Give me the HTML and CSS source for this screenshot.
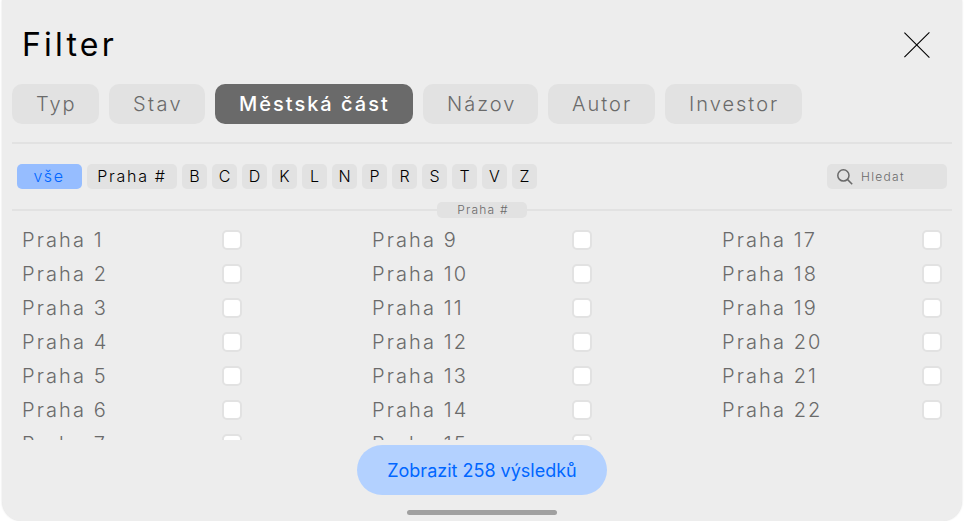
FILE: index.html
```html
<!DOCTYPE html>
<html lang="cs">
<head>
    <meta charset="UTF-8" />
    <title>Filter</title>
    <link rel="stylesheet" href="styles.css">
</head>
<body>

<div class="panel">
    <div class="header">
        <h1>Filter</h1>
        <svg class="close" width="26" height="26" viewBox="0 0 26 26">
            <path d="M0.4 0.6 L25.4 25.6 M25.4 0.4 L0.4 25.2" stroke="#000" stroke-width="1.1" fill="none"/>
        </svg>
    </div>

    <!-- Categories -->
    <div class="tabs">
        <div class="tab type">Typ</div>
        <div class="tab state">Stav</div>
        <div class="tab district active">Městská část</div>
        <div class="tab name">Názov</div>
        <div class="tab author">Autor</div>
        <div class="tab investor">Investor</div>
    </div>

    <!-- Letters and search -->
    <div class="toolbar">
        <div class="chip all">vše</div>
        <div class="chip wide">Praha #</div>
        <div class="chip">B</div>
        <div class="chip">C</div>
        <div class="chip">D</div>
        <div class="chip">K</div>
        <div class="chip">L</div>
        <div class="chip">N</div>
        <div class="chip">P</div>
        <div class="chip">R</div>
        <div class="chip">S</div>
        <div class="chip">T</div>
        <div class="chip">V</div>
        <div class="chip">Z</div>
        <div class="search">
            <svg width="16" height="16" viewBox="0 0 16 16" fill="none" stroke="#6a6a6a" stroke-width="1.5">
                <circle cx="6.4" cy="6.4" r="5.6"/>
                <path d="M10.4 10.4 L15.2 15.2"/>
            </svg>
            <span>Hledat</span>
        </div>
    </div>

    <div class="group"><span>Praha #</span></div>

    <!-- Districts -->
    <div class="list">
        <div class="column">
            <div class="row"><span>Praha 1</span><i class="box"></i></div>
            <div class="row"><span>Praha 2</span><i class="box"></i></div>
            <div class="row"><span>Praha 3</span><i class="box"></i></div>
            <div class="row"><span>Praha 4</span><i class="box"></i></div>
            <div class="row"><span>Praha 5</span><i class="box"></i></div>
            <div class="row"><span>Praha 6</span><i class="box"></i></div>
            <div class="row"><span>Praha 7</span><i class="box"></i></div>
        </div>
        <div class="column">
            <div class="row"><span>Praha 9</span><i class="box"></i></div>
            <div class="row"><span>Praha 10</span><i class="box"></i></div>
            <div class="row"><span>Praha 11</span><i class="box"></i></div>
            <div class="row"><span>Praha 12</span><i class="box"></i></div>
            <div class="row"><span>Praha 13</span><i class="box"></i></div>
            <div class="row"><span>Praha 14</span><i class="box"></i></div>
            <div class="row"><span>Praha 15</span><i class="box"></i></div>
        </div>
        <div class="column">
            <div class="row"><span>Praha 17</span><i class="box"></i></div>
            <div class="row"><span>Praha 18</span><i class="box"></i></div>
            <div class="row"><span>Praha 19</span><i class="box"></i></div>
            <div class="row"><span>Praha 20</span><i class="box"></i></div>
            <div class="row"><span>Praha 21</span><i class="box"></i></div>
            <div class="row"><span>Praha 22</span><i class="box"></i></div>
        </div>
    </div>

    <div class="submit">Zobrazit 258 výsledků</div>
    <div class="handle"></div>
</div>

</body>
</html>
```
FILE: styles.css
```css
* {
    box-sizing: border-box;
}

body {
    font-family: Inter, sans-serif;
    font-weight: 300;
    background-color: #fff;
    color: #6a6a6a;
    margin: 0;
    overflow: hidden;
}

.panel {
    width: 960px;
    height: 521px;
    margin: 0 auto;
    padding: 0 10px;
    background-color: #ededed;
    border-radius: 0 0 20px 20px;
    box-shadow: 0 0 2px rgba(0, 0, 0, 0.15);
}

.header {
    display: flex;
    justify-content: space-between;
    padding: 25px 22px 0 10px;
    height: 84px;
}

.header h1 {
    margin: 0;
    font-size: 32px;
    line-height: 39px;
    font-weight: 400;
    letter-spacing: 3.2px;
    color: #000;
}

.close {
    margin-top: 7px;
}

.tabs {
    display: flex;
    gap: 10px;
    height: 60px;
    padding-bottom: 18px;
    border-bottom: 2px solid #e2e2e2;
}

.tab {
    padding-left: 24px;
    font-size: 20px;
    line-height: 40px;
    letter-spacing: 2px;
    white-space: nowrap;
    background-color: #e2e2e2;
    border-radius: 10px;
}

.type { width: 87px; }
.state { width: 96px; letter-spacing: 2.4px; }
.district { width: 198px; }
.name { width: 115px; }
.author { width: 107px; }
.investor { width: 137px; }

.tab.active {
    font-weight: 500;
    color: #fff;
    background-color: #6a6a6a;
}

.toolbar {
    display: flex;
    gap: 5px;
    padding: 20px 5px 0;
}

.chip {
    width: 25px;
    height: 25px;
    font-size: 16px;
    line-height: 25px;
    text-align: center;
    color: #000;
    background-color: #e2e2e2;
    border-radius: 5px;
}

.chip.all {
    width: 65px;
    padding-right: 1px;
    letter-spacing: 1.6px;
    color: #0066ff;
    background-color: #96bdff;
}

.chip.wide {
    width: 90px;
    letter-spacing: 1.7px;
}

.search {
    display: flex;
    align-items: center;
    gap: 8px;
    width: 120px;
    height: 25px;
    margin-left: auto;
    padding-left: 10px;
    font-size: 12px;
    letter-spacing: 1.3px;
    background-color: #e2e2e2;
    border-radius: 5px;
}

/* group name sits in the middle of the line */
.group {
    display: flex;
    align-items: center;
    height: 16px;
    margin-top: 13px;
}

.group::before,
.group::after {
    content: "";
    flex: 1;
    height: 2px;
    background-color: #e2e2e2;
}

.group span {
    width: 90px;
    padding-left: 2px;
    font-size: 12px;
    line-height: 16px;
    letter-spacing: 1.2px;
    text-align: center;
    background-color: #e2e2e2;
    border-radius: 5px;
}

.list {
    display: grid;
    grid-template-columns: repeat(3, 220px);
    justify-content: space-between;
    height: 222px;
    padding: 10px 10px 0;
    overflow: hidden;
}

.column {
    display: flex;
    flex-direction: column;
    gap: 10px;
}

.row {
    display: flex;
    justify-content: space-between;
    align-items: center;
    height: 24px;
    font-size: 20px;
    line-height: 24px;
    letter-spacing: 2.1px;
}

.box {
    width: 20px;
    height: 20px;
    background-color: #fff;
    border: 2px solid #e2e2e2;
    border-radius: 5px;
}

.submit {
    width: 250px;
    height: 50px;
    margin: 5px auto 15px;
    font-size: 18px;
    line-height: 52px;
    font-weight: 400;
    text-align: center;
    color: #0066ff;
    background-color: #b3d1ff;
    border-radius: 25px;
}

.handle {
    width: 150px;
    height: 5px;
    margin: 0 auto;
    background-color: #a0a0a0;
    border-radius: 3px;
}
```
